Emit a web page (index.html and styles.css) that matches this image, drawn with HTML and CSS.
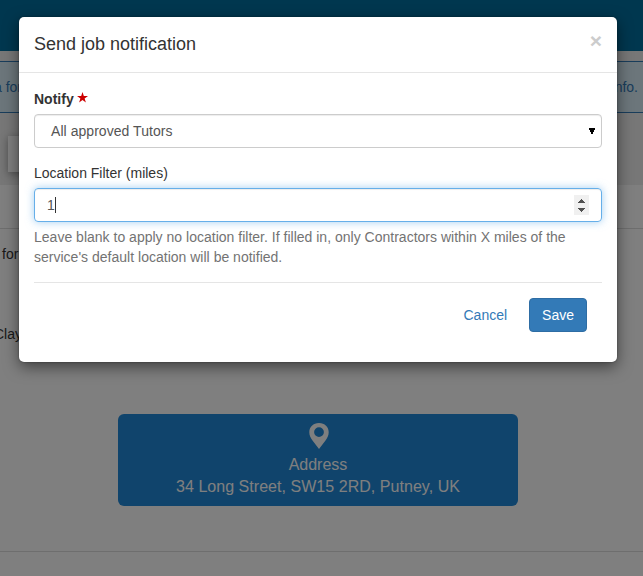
FILE: index.html
```html
<!DOCTYPE html>
<html lang="en">
<head>
<meta charset="utf-8">
<title>Send job notification</title>
<link rel="stylesheet" href="styles.css">
</head>
<body>
<div class="page">
  <nav class="navbar"></nav>
  <section class="banner">
    <div class="alert"><span class="alert-start">a for</span><span>info.</span></div>
    <div class="tile"></div>
  </section>
  <section class="heading"></section>
  <main class="details">
    <p class="line line-first">for</p>
    <p class="line line-second">Clay</p>
    <div class="address">
      <svg class="pin" width="20" height="26" viewBox="0 0 20 26"><path fill="#fff" fill-rule="evenodd" d="M10 0C4.200 0 .3 4 .3 9.200c0 3.200 1.300 5.400 3.200 8.300L10 26l6.500-8.500c1.900-2.900 3.200-5.100 3.200-8.300C19.700 4 15.800 0 10 0zM10 4.200a4.900 4.900 0 1 1 0 9.800A4.900 4.900 0 0 1 10 4.200z"/></svg>
      <div>Address</div>
      <div class="street">34 Long Street, SW15 2RD, Putney, UK</div>
    </div>
  </main>
  <hr class="rule">
</div>
<div class="backdrop">
  <div class="modal" role="dialog">
    <header class="modal-header">
      <h4 class="modal-title">Send job notification</h4>
      <span class="close">×</span>
    </header>
    <div class="modal-body">
      <div class="group">
        <div class="label required">Notify
          <svg class="star" width="11" height="11" viewBox="0 0 10 10"><path fill="#c00" d="M5 0l1.200 3.600H10L6.900 5.900 8.100 9.600 5 7.300 1.900 9.600 3.100 5.900 0 3.600h3.800z"/></svg>
        </div>
        <div class="control select"><span>All approved Tutors</span>
          <svg width="6" height="6" viewBox="0 0 6 6" shape-rendering="crispEdges"><path d="M0 0h6v2H5v2H4v2H2V4H1V2H0z"/></svg>
        </div>
      </div>
      <div class="group">
        <div class="label">Location Filter (miles)</div>
        <div class="control focused"><span class="value">1</span>
          <span class="spinner"><svg width="15" height="20" viewBox="0 0 15 20" shape-rendering="crispEdges"><path fill="#505050" d="M7 4h1v1h1v1h1v1h1v1H4V7h1V6h1V5h1zM4 13h7v1h-1v1H9v1H8v1H7v-1H6v-1H5v-1H4z"/></svg></span>
        </div>
        <p class="help">Leave blank to apply no location filter. If filled in, only Contractors within X miles of the service's default location will be notified.</p>
      </div>
      <footer class="modal-footer">
        <span class="btn btn-link">Cancel</span>
        <span class="btn btn-primary">Save</span>
      </footer>
    </div>
  </div>
</div>
</body>
</html>
```
FILE: styles.css
```css
* { box-sizing: border-box; }
body {
  margin: 0;
  height: 576px;
  overflow: hidden;
  font: 14px/20px "Liberation Sans", Arial, sans-serif;
  color: #333;
  background: #fff;
}
.page { height: 576px; }
.navbar { height: 51px; background: #006e9e; }
.banner { height: 134px; padding-top: 10px; background: #eee; overflow: hidden; }
.alert {
  display: flex;
  justify-content: space-between;
  align-items: center;
  height: 52px;
  padding-right: 5px;
  border: solid #337ab7;
  border-width: 1px 0;
  background: #d9edf7;
  color: #337ab7;
}
.alert-start { margin-left: -6px; }
.tile {
  width: 627px;
  height: 36px;
  margin: 23px 0 0 8px;
  background: #fff;
  box-shadow: 0 2px 8px rgba(0, 0, 0, .35);
  clip-path: inset(-10px 585px -10px -10px);
}
.heading { height: 44px; border-bottom: 1px solid #ddd; }
.details { height: 322px; padding-top: 15px; }
.line { margin: 0; }
.line-first { padding-left: 2px; }
.line-second { margin: 60px 0 0 -6px; }
.address {
  width: 400px;
  height: 92px;
  margin: 70px 0 0 118px;
  padding-top: 9px;
  border-radius: 6px;
  background: #2088d8;
  color: #fff;
  font-size: 16px;
  line-height: 22px;
  text-align: center;
}
.street { letter-spacing: .04px; }
.pin { display: block; margin: 0 auto 5px; position: relative; left: 1px; }
.rule { margin: 0; border: 0; border-top: 1px solid #ddd; }
.backdrop {
  position: absolute;
  inset: 0;
  padding: 17px 26px 0 19px;
  background: rgba(0, 0, 0, .5);
}
.modal {
  height: 345px;
  border-radius: 5px;
  background: #fff;
  box-shadow: 0 5px 15px rgba(0, 0, 0, .5), 0 0 2px rgba(0, 0, 0, .4);
}
.modal-header {
  display: flex;
  justify-content: space-between;
  height: 56px;
  padding: 15px;
  border-bottom: 1px solid #e5e5e5;
}
.modal-title { margin: 0; font-size: 18px; line-height: 25px; font-weight: 400; }
.close { color: #ccc; font-size: 21px; line-height: 21px; font-weight: 700; margin-top: -2px; }
.modal-body { padding: 15px; }
.group { margin-bottom: 15px; }
.label { height: 20px; margin-bottom: 5px; margin-top: 1px; }
.group + .group .label { margin-top: 0; }
.required { font-weight: 700; }
.star { vertical-align: 1px; margin-left: -1px; }
.control {
  display: flex;
  align-items: center;
  justify-content: space-between;
  height: 34px;
  padding: 0 12px;
  border: 1px solid #ccc;
  border-radius: 4px;
  color: #555;
  box-shadow: inset 0 1px 1px rgba(0, 0, 0, .075);
}
.select { padding: 0 6px 0 16px; letter-spacing: .05px; }
.focused {
  border-color: #66afe9;
  box-shadow: inset 0 1px 1px rgba(0, 0, 0, .075), 0 0 8px rgba(102, 175, 233, .6);
}
.value { height: 16px; line-height: 16px; border-right: 1px solid #333; }
.spinner { width: 15px; height: 20px; background: #f0f0f0; }
.spinner svg { display: block; }
.help { margin: 5px 0 0; color: #737373; letter-spacing: .01px; }
.modal-footer {
  display: flex;
  justify-content: flex-end;
  gap: 9px;
  padding: 15px 15px 0;
  border-top: 1px solid #e5e5e5;
}
.btn { padding: 6px 12px; border: 1px solid transparent; border-radius: 4px; }
.btn-link { color: #337ab7; }
.btn-primary { background: #337ab7; border-color: #2e6da4; color: #fff; }
```
